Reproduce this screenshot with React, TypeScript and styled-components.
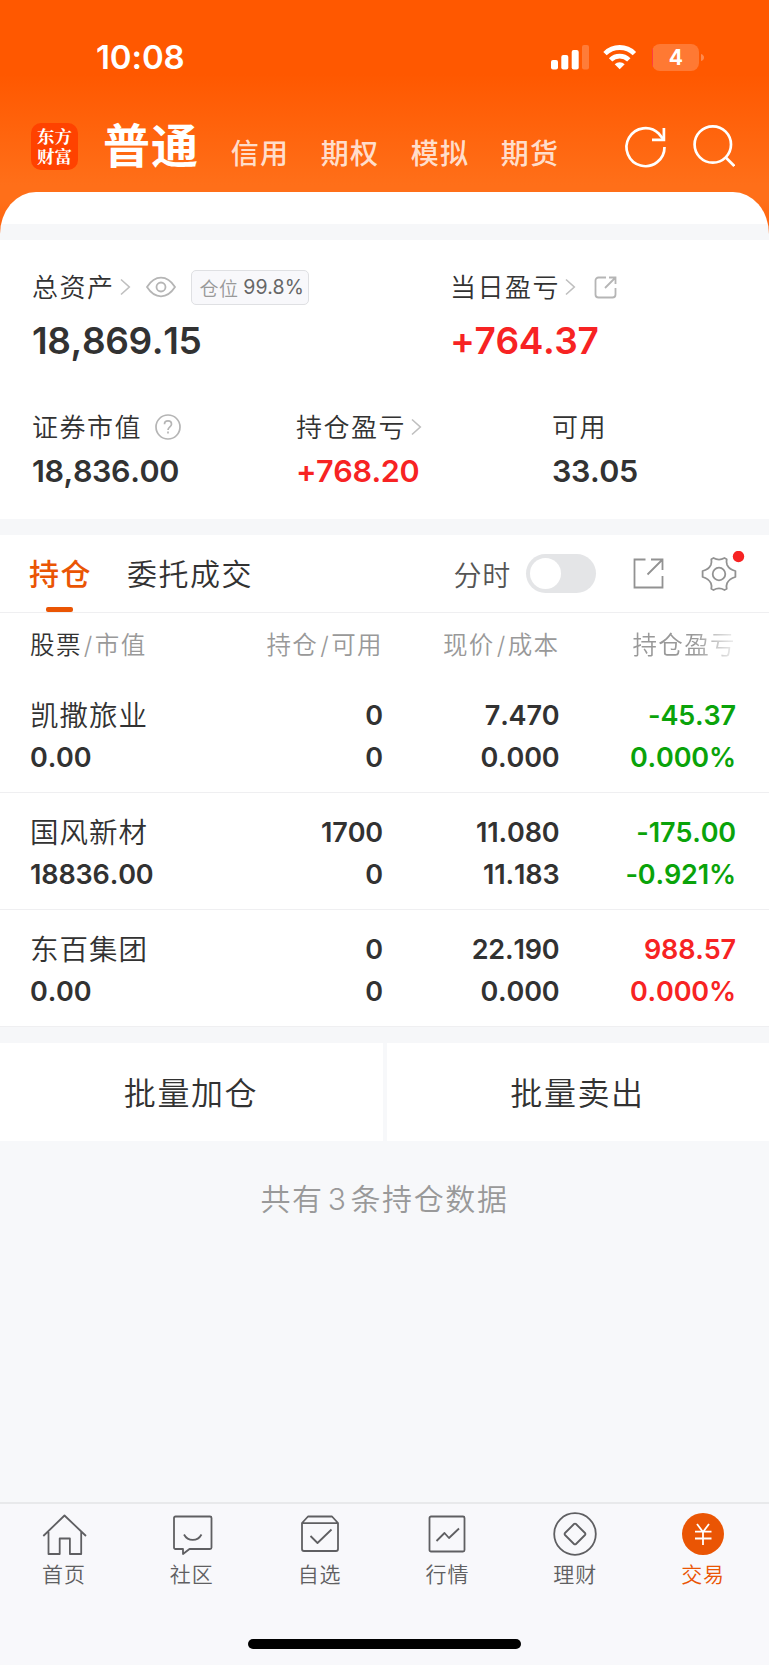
import React from "react";
import styled, { createGlobalStyle } from "styled-components";

const GlobalStyle = createGlobalStyle`
  * { box-sizing: border-box; }
  body {
    margin: 0;
    background: #f7f8fa;
    font-family: Inter, "Noto Sans CJK SC", sans-serif;
    color: #323232;
  }
`;

const ink = "#323232";
const muted = "#999999";
const accent = "#ea5504";
const red = "#f72323";
const green = "#0aa30a";

const Screen = styled.div`
  width: 769px;
  height: 1665px;
  display: flex;
  flex-direction: column;
  background: #f7f8fa;
  overflow: hidden;
`;

/* Header */

const Header = styled.header`
  height: 240px;
  flex: none;
  display: flex;
  flex-direction: column;
  background: linear-gradient(#ff5800 0, #ff5800 74px, #ff6f19 185px, #ff6f19 200px, #ff5f08 240px);
`;

const StatusBar = styled.div`
  height: 115px;
  padding: 0 65px 0 96px;
  display: flex;
  justify-content: space-between;
`;

const Clock = styled.div`
  height: 115px;
  line-height: 115px;
  font-size: 33px;
  font-weight: 600;
  letter-spacing: -0.1px;
  color: #fff;
`;

const StatusIcons = styled.svg`
  width: 157px;
  height: 115px;
`;

const TitleBar = styled.div`
  height: 76px;
  padding-left: 31px;
  padding-right: 34px;
  display: flex;
  align-items: flex-start;
`;

const Logo = styled.div`
  width: 47px;
  height: 47px;
  margin-top: 8px;
  padding-top: 3px;
  border-radius: 10px;
  background: #ff4200;
  color: #fff;
  font-family: "Noto Serif CJK SC", "Noto Sans CJK SC", serif;
  font-size: 17.5px;
  font-weight: 700;
  line-height: 19.5px;
  text-align: center;
`;

const MainTitle = styled.div`
  width: 127px;
  margin-left: 25px;
  margin-top: 1px;
  line-height: 60px;
  font-size: 47px;
  font-weight: 700;
  letter-spacing: 1px;
  color: #fff;
`;

const AccountTab = styled.div`
  width: 90px;
  line-height: 40px;
  margin-top: 19px;
  font-size: 28px;
  font-weight: 500;
  letter-spacing: 1.2px;
  text-indent: 0.7px;
  color: rgba(255, 255, 255, 0.8);
`;

const HeaderIcons = styled.svg`
  width: 114px;
  height: 50px;
  margin-top: 6px;
  margin-left: auto;
`;

const SheetTop = styled.div`
  height: 48.5px;
  margin-top: 0.5px;
  border-radius: 36px 36px 0 0 / 42px 42px 0 0;
  background: linear-gradient(#fff 0, #fff 32.5px, #f6f7f9 32.5px);
`;

/* Asset summary */

const Summary = styled.section`
  height: 279px;
  flex: none;
  padding: 27px 32px 0;
  background: #fff;
`;

const SummaryTop = styled.div`
  display: grid;
  grid-template-columns: 418px 1fr;
  height: 140px;
`;

const SummaryBottom = styled.div`
  display: grid;
  grid-template-columns: 264px 256px 1fr;
`;

const LabelRow = styled.div`
  height: 40px;
  display: flex;
  align-items: center;
`;

const Label = styled.span`
  line-height: 40px;
  padding-top: 2px;
  font-size: 26px;
  font-weight: 350;
  letter-spacing: 1.5px;
`;

const Amount = styled.div<{ $big?: boolean; $color?: string }>`
  line-height: 40px;
  margin-top: ${(p) => (p.$big ? 14 : 4)}px;
  font-size: ${(p) => (p.$big ? 37 : 30.5)}px;
  font-weight: 600;
  font-kerning: none;
  letter-spacing: ${(p) => (p.$big ? -0.4 : -0.4)}px;
  color: ${(p) => p.$color ?? ink};
`;

const Icon = styled.svg<{ $left?: number }>`
  display: block;
  flex: none;
  margin-left: ${(p) => p.$left ?? 0}px;
  fill: none;
`;

const PositionBadge = styled.div`
  width: 118px;
  height: 35px;
  margin-left: 15px;
  padding-left: 8px;
  display: flex;
  align-items: center;
  white-space: nowrap;
  border: 1px solid #dfe0e3;
  border-radius: 5px;
  background: #f8f8fb;
  font-size: 19px;
  font-weight: 350;
  letter-spacing: 0.4px;
  color: ${muted};
`;

const BadgeValue = styled.span`
  margin-left: 5px;
  font-size: 19.5px;
  font-weight: 400;
  letter-spacing: 0.1px;
  color: #666;
`;

const Spacer = styled.div`
  height: 16px;
  flex: none;
  background: #f6f7f9;
`;

/* Holdings */

const TabBar = styled.div`
  height: 78px;
  flex: none;
  padding: 0 23px 0 29px;
  display: flex;
  align-items: center;
  border-bottom: 1px solid #efeff1;
  background: #fff;
`;

const Tab = styled.div<{ $active?: boolean }>`
  position: relative;
  height: 77px;
  line-height: 79px;
  margin-right: 35px;
  font-size: 30px;
  font-weight: ${(p) => (p.$active ? 500 : 350)};
  letter-spacing: 1.5px;
  color: ${(p) => (p.$active ? accent : ink)};
`;

const TabMark = styled.div`
  position: absolute;
  left: 17px;
  bottom: 0;
  width: 27px;
  height: 5px;
  border-radius: 2px;
  background: ${accent};
`;

const SwitchLabel = styled.div`
  margin-left: auto;
  font-size: 28px;
  font-weight: 350;
  letter-spacing: 0.8px;
  color: #555;
`;

const Switch = styled.div`
  width: 70px;
  height: 39px;
  margin-left: 15px;
  padding: 4px;
  border-radius: 20px;
  background: #e4e5e7;
`;

const Knob = styled.div`
  width: 31px;
  height: 31px;
  border-radius: 50%;
  background: #fff;
`;

const Table = styled.div`
  flex: none;
  background: #fff;
`;

const columns = "171px 182px 176.5px 176.5px";

const HeadRow = styled.div`
  display: grid;
  grid-template-columns: ${columns};
  height: 63px;
  padding: 0 32.5px 0 30px;
  line-height: 65px;
  font-size: 24.5px;
  font-weight: 350;
  letter-spacing: 1.4px;
  color: ${muted};
  white-space: nowrap;
`;

const HeadCell = styled.div<{ $right?: boolean; $fade?: boolean }>`
  text-align: ${(p) => (p.$right ? "right" : "left")};
  ${(p) =>
    p.$fade &&
    "-webkit-mask-image: linear-gradient(90deg, #000 0, #000 134px, transparent 183px);"}
`;

const Strong = styled.span`
  color: ${ink};
`;

const Slash = styled.span`
  margin: 0 1px 0 2px;
`;

const StockRow = styled.div`
  display: grid;
  grid-template-columns: ${columns};
  height: 117px;
  padding: 19px 33px 0 30px;
  border-bottom: 1px solid #efeff1;
`;

const StockCell = styled.div<{ $right?: boolean; $color?: string }>`
  text-align: ${(p) => (p.$right ? "right" : "left")};
  color: ${(p) => p.$color ?? ink};
  font-size: 27px;
  font-weight: 600;
  font-kerning: none;
  letter-spacing: -0.15px;
  line-height: 42.4px;
  white-space: nowrap;
`;

const StockName = styled.div`
  font-size: 28.5px;
  font-weight: 350;
  letter-spacing: 1px;
`;

const BatchActions = styled.div`
  height: 98px;
  flex: none;
  display: grid;
  grid-template-columns: 383px 1fr;
  gap: 4px;
`;

const BatchButton = styled.button`
  border: 0;
  padding: 0 1px 3px 0;
  background: #fff;
  font: 350 32px Inter, "Noto Sans CJK SC", sans-serif;
  letter-spacing: 1.6px;
  color: ${ink};
`;

const CountNote = styled.div`
  flex: 1;
  padding-top: 36px;
  text-align: center;
  line-height: 44px;
  font-size: 30px;
  font-weight: 350;
  letter-spacing: 1.6px;
  color: ${muted};
`;

const Count = styled.span`
  margin: 0 3px 0 4px;
`;

/* Bottom navigation */

const BottomNav = styled.nav`
  height: 163px;
  flex: none;
  display: flex;
  flex-direction: column;
  align-items: center;
  border-top: 2px solid #e8e9eb;
  background: #f8f8fb;
`;

const NavItems = styled.div`
  width: 100%;
  height: 135px;
  padding-right: 2px;
  display: grid;
  grid-template-columns: repeat(6, 1fr);
`;

const NavItem = styled.div<{ $active?: boolean }>`
  display: flex;
  flex-direction: column;
  align-items: center;
  padding-top: 8px;
  line-height: 30px;
  font-size: 21px;
  font-weight: 350;
  letter-spacing: 0.9px;
  color: ${(p) => (p.$active ? accent : "#5f5f62")};
`;

const NavIcon = styled.svg`
  width: 46px;
  height: 46px;
  margin-bottom: 2px;
  fill: none;
  stroke: currentColor;
  stroke-width: 1.8;
  stroke-linejoin: round;
`;

const HomeIndicator = styled.div`
  width: 273px;
  height: 10px;
  border-radius: 5px;
  background: #000;
`;

const Chevron = ({ left = 7 }: { left?: number }) => (
  <Icon $left={left} width="11" height="18" viewBox="0 0 11 18">
    <path d="M1 1.5 9.3 9 1 16.5" stroke="#bfbfbf" strokeWidth="1.6" />
  </Icon>
);

const navItems = [
  {
    name: "首页",
    icon: <path d="M2.3 24 23.5 3.5 45 24M7.5 20v22h11.2V26.5h10.2V42h11.3V20" />,
  },
  {
    name: "社区",
    icon: (
      <>
        <path d="M6.500 4.500H41a1.500 1.500 0 0 1 1.500 1.500V35.500a1.500 1.500 0 0 1-1.500 1.500H20.500L14 42V37H6.500A1.500 1.500 0 0 1 5 35.500V6A1.500 1.500 0 0 1 6.500 4.500Z" />
        <path d="M15 22.500c4 7.300 13.500 7.300 17.500 0" />
      </>
    ),
  },
  {
    name: "自选",
    icon: (
      <>
        <path d="M5 11v26a2 2 0 0 0 2 2h32a2 2 0 0 0 2-2V11l-6-6.500H11Z M5 11.200h36" />
        <path d="m13.500 24 7 7 14-13.500" />
      </>
    ),
  },
  {
    name: "行情",
    icon: (
      <>
        <rect x="5.500" y="4.500" width="35" height="35" rx="1.500" />
        <path d="m12.500 29 8-8 4.500 5 10-9.500" />
      </>
    ),
  },
  {
    name: "理财",
    icon: (
      <>
        <circle cx="23" cy="22" r="20.800" />
        <path d="M22 12 13 21a1.400 1.400 0 0 0 0 2L22 32a1.400 1.400 0 0 0 2 0L33 23a1.400 1.400 0 0 0 0-2L24 12a1.400 1.400 0 0 0-2 0Z" />
      </>
    ),
  },
  {
    name: "交易",
    active: true,
    icon: (
      <>
        <circle cx="23" cy="22" r="21" fill={accent} stroke="none" />
        <path d="m17 12 6 8 6-8M15 19.700h16.500M15 26.500h16.500M23 20v13" stroke="#fff" />
      </>
    ),
  },
];

const stocks = [
  { name: "凯撒旅业", value: "0.00", held: "0", free: "0", price: "7.470", cost: "0.000", gain: "-45.37", rate: "0.000%", color: green },
  { name: "国风新材", value: "18836.00", held: "1700", free: "0", price: "11.080", cost: "11.183", gain: "-175.00", rate: "-0.921%", color: green },
  { name: "东百集团", value: "0.00", held: "0", free: "0", price: "22.190", cost: "0.000", gain: "988.57", rate: "0.000%", color: red },
];

export default function App() {
  return (
    <Screen>
      <GlobalStyle />
      <Header>
        <StatusBar>
          <Clock>10:08</Clock>
          <StatusIcons viewBox="547 0 157 115" fill="#fff">
            <rect x="551" y="60" width="7" height="9.500" rx="2" />
            <rect x="561.300" y="55" width="7" height="14.500" rx="2" />
            <rect x="571.700" y="50" width="7" height="19.500" rx="2" />
            <rect x="582" y="45" width="7" height="24.500" rx="2" opacity=".22" />
            <g fill="none" stroke="#fff" strokeWidth="4.800">
              <path d="M605 53.600a20.800 20.800 0 0 1 29.400 0" />
              <path d="M610.600 59.900a13 13 0 0 1 18.200 0" />
            </g>
            <path d="m619.700 69.300-5-5a7.200 7.200 0 0 1 10 0Z" />
            <rect x="652" y="44" width="47" height="27" rx="8" opacity=".2" />
            <path d="M701 54q3 1 3 3.500t-3 3.500Z" opacity=".3" />
            <path d="M653 47.500q-1 2-1 4v12q0 2 1 4Z" fill="#ff3b40" />
            <text x="675.800" y="65" fontSize="21" fontWeight="700" textAnchor="middle">4</text>
          </StatusIcons>
        </StatusBar>
        <TitleBar>
          <Logo>东方<br />财富</Logo>
          <MainTitle>普通</MainTitle>
          {["信用", "期权", "模拟", "期货"].map((t) => (
            <AccountTab key={t}>{t}</AccountTab>
          ))}
          <HeaderIcons viewBox="620.5 121 114 50" fill="none" stroke="#fff" strokeWidth="2.700">
            <path d="M664 147a19 19 0 1 1-5.500-13.200L663 139.300" />
            <path d="M663.400 128v11.800H651.500" />
            <circle cx="712.300" cy="144.500" r="18.200" />
            <path d="m724.800 157 9 9" />
          </HeaderIcons>
        </TitleBar>
        <SheetTop />
      </Header>

      <Summary>
        <SummaryTop>
          <div>
            <LabelRow>
              <Label>总资产</Label>
              <Chevron left={5} />
              <Icon $left={15} width="30" height="22" viewBox="0 0 30 22" stroke="#b5b5b5" strokeWidth="1.800">
                <path d="M1 11Q7 1.700 15 1.700T29 11Q23 20.300 15 20.300T1 11Z" />
                <circle cx="15" cy="11" r="4.500" />
              </Icon>
              <PositionBadge>
                仓位<BadgeValue>99.8%</BadgeValue>
              </PositionBadge>
            </LabelRow>
            <Amount $big>18,869.15</Amount>
          </div>
          <div>
            <LabelRow>
              <Label>当日盈亏</Label>
              <Chevron left={5} />
              <Icon $left={18} width="23" height="23" viewBox="0 0 23 23" stroke="#b5b5b5" strokeWidth="1.800">
                <path d="M12 1.500H4.500a3 3 0 0 0-3 3v14a3 3 0 0 0 3 3h14a3 3 0 0 0 3-3V12M15 1.500h6.500V8M21.500 1.500 11 12" />
              </Icon>
            </LabelRow>
            <Amount $big $color={red}>+764.37</Amount>
          </div>
        </SummaryTop>
        <SummaryBottom>
          <div>
            <LabelRow>
              <Label>证券市值</Label>
              <Icon $left={13} width="26" height="26" viewBox="0 0 26 26" stroke="#b5b5b5" strokeWidth="1.700">
                <circle cx="13" cy="13" r="12" />
                <path d="M9.500 10.200c0-4.400 7-4.400 7 0 0 2.500-3.500 2.800-3.500 5.800M13 17.500v2" />
              </Icon>
            </LabelRow>
            <Amount>18,836.00</Amount>
          </div>
          <div>
            <LabelRow>
              <Label>持仓盈亏</Label>
              <Chevron left={5} />
            </LabelRow>
            <Amount $color={red}>+768.20</Amount>
          </div>
          <div>
            <LabelRow>
              <Label>可用</Label>
            </LabelRow>
            <Amount>33.05</Amount>
          </div>
        </SummaryBottom>
      </Summary>
      <Spacer />

      <TabBar>
        <Tab $active>
          持仓
          <TabMark />
        </Tab>
        <Tab>委托成交</Tab>
        <SwitchLabel>分时</SwitchLabel>
        <Switch>
          <Knob />
        </Switch>
        <Icon $left={37} width="31" height="31" viewBox="0 0 31 31" stroke="#929292" strokeWidth="1.800">
          <path d="M12.500 1.500h-11v28h28V18M18 1.500h11.500V12M29.500 1.500 14.500 16.500" />
        </Icon>
        <Icon $left={35} width="47" height="46" viewBox="699 551 47 46" stroke="#929292" strokeWidth="1.800">
          <circle cx="719" cy="574" r="6.300" />
          <path d="M713.500 558q5.500 3.200 11 0l2.200 1.200q-.6 3.300.4 5.600q2.200 4.600 8.300 6.200v6q-6.100 1.600-8.300 6.200q-1 2.300-.4 5.600l-2.200 1.200q-5.500-3.200-11 0l-2.200-1.200q.6-3.300-.4-5.600q-2.200-4.600-8.300-6.200v-6q6.100-1.600 8.300-6.200q1-2.300.4-5.600Z" strokeLinejoin="round" />
          <circle cx="738.500" cy="556.500" r="5.700" fill={red} stroke="none" />
        </Icon>
      </TabBar>

      <Table>
        <HeadRow>
          <HeadCell><Strong>股票</Strong><Slash>/</Slash>市值</HeadCell>
          <HeadCell $right>持仓<Slash>/</Slash>可用</HeadCell>
          <HeadCell $right>现价<Slash>/</Slash>成本</HeadCell>
          <HeadCell $right $fade>持仓盈亏</HeadCell>
        </HeadRow>
        {stocks.map((s) => (
          <StockRow key={s.name}>
            <StockCell>
              <StockName>{s.name}</StockName>
              <div>{s.value}</div>
            </StockCell>
            <StockCell $right>
              <div>{s.held}</div>
              <div>{s.free}</div>
            </StockCell>
            <StockCell $right>
              <div>{s.price}</div>
              <div>{s.cost}</div>
            </StockCell>
            <StockCell $right $color={s.color}>
              <div>{s.gain}</div>
              <div>{s.rate}</div>
            </StockCell>
          </StockRow>
        ))}
      </Table>
      <Spacer />

      <BatchActions>
        <BatchButton>批量加仓</BatchButton>
        <BatchButton>批量卖出</BatchButton>
      </BatchActions>
      <CountNote>
        共有<Count>3</Count>条持仓数据
      </CountNote>

      <BottomNav>
        <NavItems>
          {navItems.map((n) => (
            <NavItem key={n.name} $active={n.active}>
              <NavIcon viewBox="0 0 46 46">{n.icon}</NavIcon>
              {n.name}
            </NavItem>
          ))}
        </NavItems>
        <HomeIndicator />
      </BottomNav>
    </Screen>
  );
}
